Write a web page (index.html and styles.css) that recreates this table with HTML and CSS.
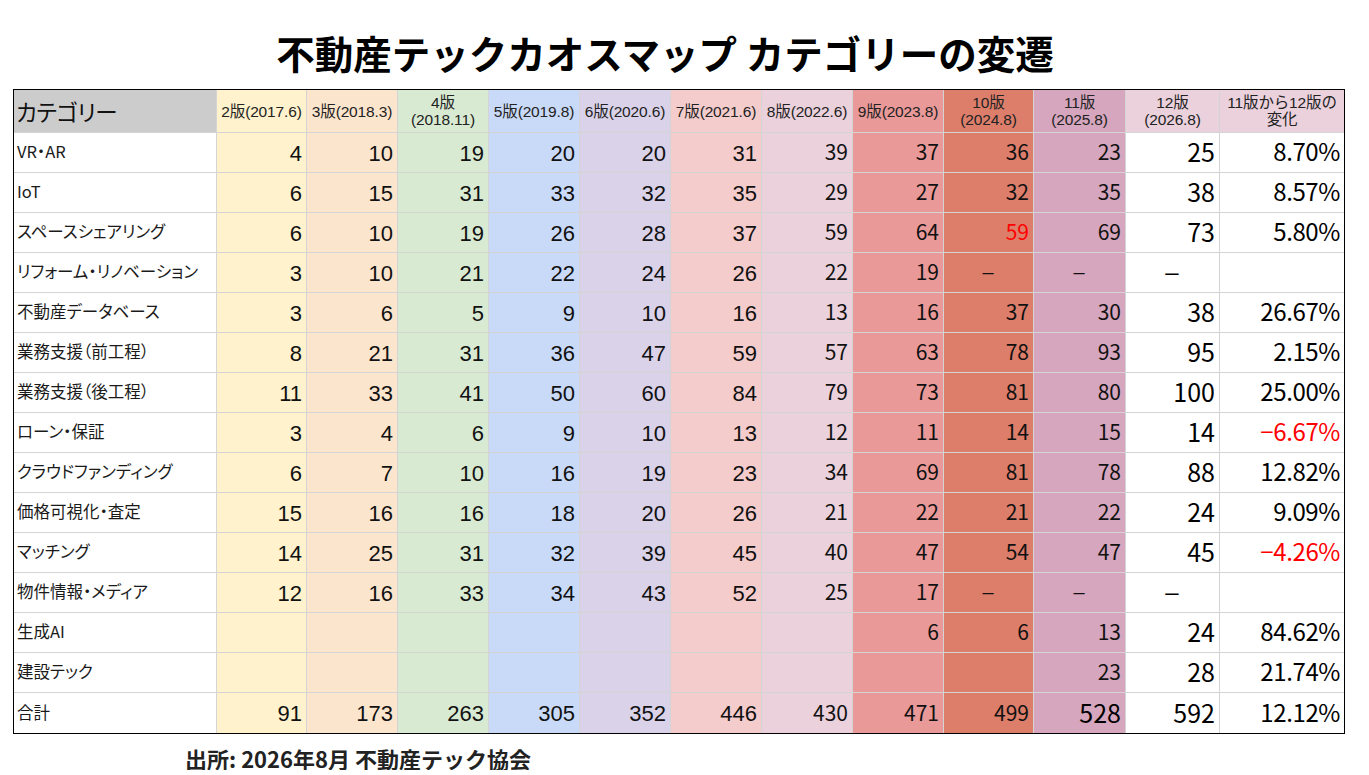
FILE: index.html
```html
<!DOCTYPE html>
<html lang="ja">
<head>
<meta charset="utf-8">
<title>不動産テックカオスマップ カテゴリーの変遷</title>
<link rel="stylesheet" href="styles.css">
</head>
<body>
<div class="page">
  <h1 class="title">不動産テックカオスマップ カテゴリーの変遷</h1>
  <div class="frame">
    <table class="grid">
      <colgroup>
        <col class="w-cat">
        <col class="c2"><col class="c3"><col class="c4"><col class="c5"><col class="c6">
        <col class="c7"><col class="c8"><col class="c9"><col class="c10"><col class="c11">
        <col class="w-12"><col class="w-chg">
      </colgroup>
      <thead>
        <tr class="head">
          <th class="hcat">カテゴリー</th>
          <th>2版(2017.6)</th>
          <th>3版(2018.3)</th>
          <th>4版<br>(2018.11)</th>
          <th>5版(2019.8)</th>
          <th>6版(2020.6)</th>
          <th>7版(2021.6)</th>
          <th>8版(2022.6)</th>
          <th>9版(2023.8)</th>
          <th>10版<br>(2024.8)</th>
          <th>11版<br>(2025.8)</th>
          <th class="hpink">12版<br>(2026.8)</th>
          <th class="hpink">11版から12版の<br>変化</th>
        </tr>
      </thead>
      <tbody>
        <tr><td class="cat">VR・AR</td><td>4</td><td>10</td><td>19</td><td>20</td><td>20</td><td>31</td><td class="g">39</td><td class="g">37</td><td class="g">36</td><td class="g">23</td><td class="big">25</td><td class="big chg">8.70%</td></tr>
        <tr><td class="cat">IoT</td><td>6</td><td>15</td><td>31</td><td>33</td><td>32</td><td>35</td><td class="g">29</td><td class="g">27</td><td class="g">32</td><td class="g">35</td><td class="big">38</td><td class="big chg">8.57%</td></tr>
        <tr><td class="cat">スペースシェアリング</td><td>6</td><td>10</td><td>19</td><td>26</td><td>28</td><td>37</td><td class="g">59</td><td class="g">64</td><td class="g red">59</td><td class="g">69</td><td class="big">73</td><td class="big chg">5.80%</td></tr>
        <tr><td class="cat">リフォーム・リノベーション</td><td>3</td><td>10</td><td>21</td><td>22</td><td>24</td><td>26</td><td class="g">22</td><td class="g">19</td><td class="g dash">–</td><td class="g dash">–</td><td class="big dash">–</td><td class="big chg"></td></tr>
        <tr><td class="cat">不動産データベース</td><td>3</td><td>6</td><td>5</td><td>9</td><td>10</td><td>16</td><td class="g">13</td><td class="g">16</td><td class="g">37</td><td class="g">30</td><td class="big">38</td><td class="big chg">26.67%</td></tr>
        <tr><td class="cat">業務支援（前工程）</td><td>8</td><td>21</td><td>31</td><td>36</td><td>47</td><td>59</td><td class="g">57</td><td class="g">63</td><td class="g">78</td><td class="g">93</td><td class="big">95</td><td class="big chg">2.15%</td></tr>
        <tr><td class="cat">業務支援（後工程）</td><td>11</td><td>33</td><td>41</td><td>50</td><td>60</td><td>84</td><td class="g">79</td><td class="g">73</td><td class="g">81</td><td class="g">80</td><td class="big">100</td><td class="big chg">25.00%</td></tr>
        <tr><td class="cat">ローン・保証</td><td>3</td><td>4</td><td>6</td><td>9</td><td>10</td><td>13</td><td class="g">12</td><td class="g">11</td><td class="g">14</td><td class="g">15</td><td class="big">14</td><td class="big chg red">−6.67%</td></tr>
        <tr><td class="cat">クラウドファンディング</td><td>6</td><td>7</td><td>10</td><td>16</td><td>19</td><td>23</td><td class="g">34</td><td class="g">69</td><td class="g">81</td><td class="g">78</td><td class="big">88</td><td class="big chg">12.82%</td></tr>
        <tr><td class="cat">価格可視化・査定</td><td>15</td><td>16</td><td>16</td><td>18</td><td>20</td><td>26</td><td class="g">21</td><td class="g">22</td><td class="g">21</td><td class="g">22</td><td class="big">24</td><td class="big chg">9.09%</td></tr>
        <tr><td class="cat">マッチング</td><td>14</td><td>25</td><td>31</td><td>32</td><td>39</td><td>45</td><td class="g">40</td><td class="g">47</td><td class="g">54</td><td class="g">47</td><td class="big">45</td><td class="big chg red">−4.26%</td></tr>
        <tr><td class="cat">物件情報・メディア</td><td>12</td><td>16</td><td>33</td><td>34</td><td>43</td><td>52</td><td class="g">25</td><td class="g">17</td><td class="g dash">–</td><td class="g dash">–</td><td class="big dash">–</td><td class="big chg"></td></tr>
        <tr><td class="cat">生成AI</td><td></td><td></td><td></td><td></td><td></td><td></td><td class="g"></td><td class="g">6</td><td class="g">6</td><td class="g">13</td><td class="big">24</td><td class="big chg">84.62%</td></tr>
        <tr><td class="cat">建設テック</td><td></td><td></td><td></td><td></td><td></td><td></td><td class="g"></td><td class="g"></td><td class="g"></td><td class="g">23</td><td class="big">28</td><td class="big chg">21.74%</td></tr>
        <tr class="last"><td class="cat">合計</td><td>91</td><td>173</td><td>263</td><td>305</td><td>352</td><td>446</td><td class="g">430</td><td class="g">471</td><td class="g">499</td><td class="big">528</td><td class="big">592</td><td class="big chg">12.12%</td></tr>
      </tbody>
    </table>
  </div>
  <p class="source">出所: 2026年8月 不動産テック協会</p>
</div>
</body>
</html>
```

FILE: styles.css
```css
html, body {
  margin: 0;
  padding: 0;
  background: #ffffff;
}

body {
  font-family: "Noto Sans CJK JP", sans-serif;
  color: #111111;
}

.page {
  padding-left: 13px;
  width: 1332px;
}

.title {
  margin: 0;
  box-sizing: border-box;
  height: 89px;
  padding-top: 32px;
  padding-right: 28px;
  font-size: 38.5px;
  line-height: 40px;
  font-weight: 700;
  text-align: center;
  color: #000000;
  white-space: nowrap;
}

.frame {
  width: 1330px;
  border: 1px solid #000000;
}

.grid {
  width: 1330px;
  table-layout: fixed;
  border-collapse: separate;
  border-spacing: 0;
}

.w-cat { width: 203px; }
.c2 { width: 90px; background: #fff2cc; }
.c3 { width: 91px; background: #fce5cd; }
.c4 { width: 91px; background: #d9ead3; }
.c5 { width: 91px; background: #c9daf8; }
.c6 { width: 91px; background: #d9d2e9; }
.c7 { width: 91px; background: #f4cccc; }
.c8 { width: 91px; background: #ead1dc; }
.c9 { width: 91px; background: #ea9999; }
.c10 { width: 90px; background: #dd7e6b; }
.c11 { width: 92px; background: #d5a6bd; }
.w-12 { width: 94px; }
.w-chg { width: 124px; }

.grid th,
.grid td {
  border-right: 1px solid #d4d4d4;
  border-bottom: 1px solid #d4d4d4;
  overflow: hidden;
  white-space: nowrap;
}

.grid tr > :last-child {
  border-right: 0;
}

.grid tr.last > td {
  border-bottom: 0;
}

.head {
  height: 43px;
}

.grid th {
  padding: 0;
  font-family: "Liberation Sans", "Noto Sans CJK JP", sans-serif;
  font-weight: 400;
  font-size: 15.5px;
  line-height: 17px;
  letter-spacing: -0.15px;
  color: #222222;
  text-align: center;
  vertical-align: middle;
}

.grid th.hcat {
  background: #cccccc;
  text-align: left;
  padding-left: 2px;
  font-family: "Noto Sans CJK JP", sans-serif;
  font-feature-settings: "palt" 1;
  font-size: 22.5px;
  line-height: 30px;
  letter-spacing: -0.3px;
  color: #111111;
}

.grid th.hpink {
  background: #ead1dc;
}

.grid tbody tr {
  height: 40px;
}

.grid td {
  padding: 2px 4px 0 3px;
  font-family: "Liberation Sans", sans-serif;
  font-size: 22px;
  line-height: 26px;
  text-align: right;
  vertical-align: middle;
  color: #111111;
}

.grid td.cat {
  padding-top: 0;
  padding-bottom: 3px;
  text-align: left;
  font-family: "Noto Sans CJK JP", sans-serif;
  font-feature-settings: "palt" 1;
  font-size: 16.5px;
  color: #1a1a1a;
}

.grid td.g {
  padding-top: 0;
  padding-bottom: 3px;
  font-family: "Noto Sans CJK JP", sans-serif;
  font-size: 21px;
}

.grid td.big {
  padding-top: 0;
  padding-bottom: 3px;
  font-family: "Noto Sans CJK JP", sans-serif;
  font-size: 25px;
  color: #000000;
}

.grid td.chg {
  font-size: 24px;
  letter-spacing: -0.4px;
}

.grid td.dash {
  padding-top: 0;
  padding-bottom: 2px;
  text-align: center;
  font-family: "Liberation Sans", sans-serif;
  font-size: 20px;
}

.grid td.big.dash {
  font-size: 24px;
}

.grid td.red {
  color: #ff0000;
}

.source {
  margin: 12px 0 0 172px;
  font-size: 22px;
  line-height: 24px;
  font-weight: 700;
  color: #222222;
}
```
